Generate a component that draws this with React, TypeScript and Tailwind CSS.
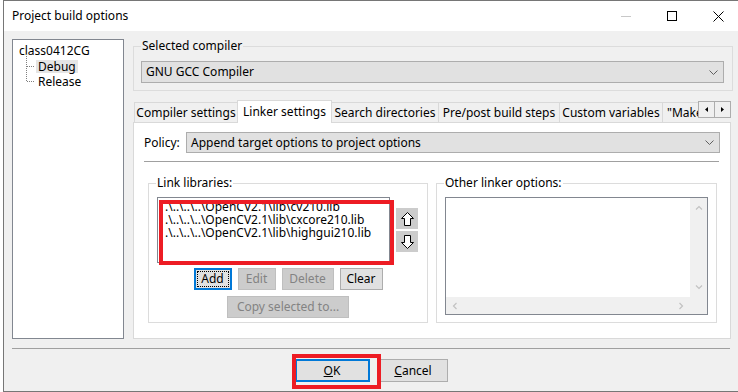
import React from "react";

const Chevron = () => (
  <svg width="9" height="5" viewBox="0 0 9 5">
    <path d="M0.5 0.5 L4.5 4.5 L8.5 0.5" fill="none" stroke="#606060" strokeWidth="1" />
  </svg>
);

const Dropdown = ({ text, className }: { text: string; className: string }) => (
  <div
    className={`flex items-center justify-between border border-[#adadad] bg-[#e1e1e1] pl-[4px] pr-[5px] ${className}`}
  >
    <span>{text}</span>
    <Chevron />
  </div>
);

const Arrow = ({ down }: { down?: boolean }) => (
  <svg width="13" height="14" viewBox="0 0 13 14" className={down ? "rotate-180" : ""}>
    <path
      d="M6.5 0.5 L12.5 6.5 L9.5 6.5 L9.5 13.5 L3.5 13.5 L3.5 6.5 L0.5 6.5 Z"
      fill="white"
      stroke="black"
      strokeWidth="1"
      strokeLinejoin="miter"
    />
  </svg>
);

const SbChevron = ({ d }: { d: string }) => (
  <svg width="8" height="8" viewBox="0 0 8 8">
    <path d={d} fill="none" stroke="#c2c2c2" strokeWidth="1.2" />
  </svg>
);

const tabs = [
  { label: "Compiler settings", w: "w-[104px]" },
  { label: "Linker settings", w: "w-[95px]", active: true },
  { label: "Search directories", w: "w-[108px]" },
  { label: "Pre/post build steps", w: "w-[122px]" },
  { label: "Custom variables", w: "w-[104px]" },
];

export default function App() {
  return (
    <div className="w-[738px] h-[392px] overflow-hidden bg-white text-[12px] leading-[16px] text-black font-['Noto_Sans','DejaVu_Sans',sans-serif]">
      <div className="ml-[3px] flex h-[392px] w-[738px] flex-col border-t border-l border-b border-[#767676]">
        {/* title bar */}
        <div className="flex h-[30px] shrink-0 items-center bg-white">
          <span className="pl-[8px]">Project build options</span>
          <div className="ml-auto flex h-full">
            <div className="flex w-[46px] items-center justify-center">
              <div className="h-px w-[10px] bg-[#c8c8c8]" />
            </div>
            <div className="flex w-[46px] items-center justify-center">
              <div className="h-[10px] w-[10px] border border-black" />
            </div>
            <div className="flex w-[46px] items-center justify-center">
              <svg width="11" height="11" viewBox="0 0 11 11">
                <path d="M0.5 0.5 L10.5 10.5 M10.5 0.5 L0.5 10.5" stroke="black" strokeWidth="1" />
              </svg>
            </div>
          </div>
        </div>

        {/* body */}
        <div className="flex flex-1 flex-col bg-[#f0f0f0] pt-[7px]">
          <div className="flex pl-[8px]">
            {/* tree */}
            <div className="mt-[1px] h-[300px] w-[112px] border border-[#828790] bg-white pl-[6px] pt-[3px]">
              <div className="h-[15px] leading-[15px]">class0412CG</div>
              <div className="flex">
                <svg width="12" height="34" viewBox="0 0 12 34" className="ml-[5px] -mt-[4px]">
                  <line x1="2.5" y1="0" x2="2.5" y2="28" stroke="#808080" strokeDasharray="1 1" />
                  <line x1="3" y1="12.5" x2="11" y2="12.5" stroke="#808080" strokeDasharray="1 1" />
                  <line x1="3" y1="27.5" x2="11" y2="27.5" stroke="#808080" strokeDasharray="1 1" />
                </svg>
                <div className="flex flex-col">
                  <div className="h-[15px] pt-[1px]">
                    <span className="inline-block bg-[#e5e5e5] px-[2px] leading-[13px]">Debug</span>
                  </div>
                  <div className="h-[16px] pl-[2px] pt-[1px] leading-[15px]">Release</div>
                </div>
              </div>
            </div>

            {/* right column */}
            <div className="ml-[9px] flex w-[600px] flex-col">
              <fieldset className="border border-[#dcdcdc] pb-[7px] pl-[7px] pr-[8px] pt-[7px]">
                <legend className="px-[1px]">Selected compiler</legend>
                <Dropdown text="GNU GCC Compiler" className="h-[22px]" />
              </fieldset>

              {/* tab strip */}
              <div className="mt-[9px] flex h-[22px] items-end pl-[1px]">
                {tabs.map((t, i) =>
                  t.active ? (
                    <div
                      key={t.label}
                      className={`relative z-10 -mb-px -ml-px flex h-[23px] items-center justify-center border-t border-l border-r border-[#d9d9d9] bg-white ${t.w}`}
                    >
                      {t.label}
                    </div>
                  ) : (
                    <div
                      key={t.label}
                      className={`flex h-[20px] items-center justify-center border-t border-l border-r border-[#d9d9d9] bg-[#f0f0f0] ${i > 0 ? "-ml-px" : ""} ${t.w}`}
                    >
                      {t.label}
                    </div>
                  )
                )}
                <div className="-ml-px flex h-[20px] w-[36px] items-center overflow-hidden whitespace-nowrap border-t border-l border-[#d9d9d9] bg-[#f0f0f0] pl-[4px]">
                  "Make
                </div>
                <div className="mb-[4px] flex h-[17px] w-[17px] items-center justify-center self-end border border-[#adadad] bg-[#f0f0f0]">
                  <svg width="3" height="5" viewBox="0 0 3 5">
                    <path d="M3 0 L0 2.5 L3 5 Z" fill="black" />
                  </svg>
                </div>
                <div className="-ml-px mb-[4px] flex h-[17px] w-[17px] items-center justify-center border border-[#adadad] bg-[#f0f0f0]">
                  <svg width="3" height="5" viewBox="0 0 3 5">
                    <path d="M0 0 L3 2.5 L0 5 Z" fill="black" />
                  </svg>
                </div>
              </div>

              {/* tab panel */}
              <div className="h-[217px] w-[598px] border border-[#d9d9d9] bg-white px-[10px] pt-[9px]">
                <div className="flex items-center">
                  <span className="w-[42px]">Policy:</span>
                  <Dropdown text="Append target options to project options" className="h-[21px] flex-1" />
                </div>
                <div className="mr-[1px] mt-[8px] h-px bg-[#a0a0a0]" />

                <div className="ml-[4px] mt-[13px] flex gap-[8px]">
                  {/* link libraries */}
                  <fieldset className="w-[280px] border border-[#dcdcdc] px-[8px] pb-[4px] pt-[6px]">
                    <legend className="-ml-[1px] px-[1px]">Link libraries:</legend>
                    <div className="flex gap-[6px]">
                      <div className="relative h-[66px] w-[233px] border border-[#828790] bg-white pl-[7px] pt-[2px] leading-[13px] whitespace-nowrap">
                        <div className="h-full overflow-hidden">
                          <div>.\..\..\..\OpenCV2.1\lib\cv210.lib</div>
                          <div>.\..\..\..\OpenCV2.1\lib\cxcore210.lib</div>
                          <div>.\..\..\..\OpenCV2.1\lib\highgui210.lib</div>
                        </div>
                        <div className="pointer-events-none absolute left-[1px] top-[2px] h-[65px] w-[235px] border-4 border-[#ed1c24]" />
                      </div>
                      <div className="mt-[11px] flex flex-col gap-[2px]">
                        <div className="flex h-[21px] w-[22px] items-center justify-center bg-[#cccccc]">
                          <Arrow />
                        </div>
                        <div className="flex h-[21px] w-[22px] items-center justify-center bg-[#cccccc]">
                          <Arrow down />
                        </div>
                      </div>
                    </div>
                    <div className="mt-[5px] flex justify-center gap-[6px]">
                      <div className="flex h-[22px] w-[38px] border-2 border-[#0078d7] bg-[#e1e1e1]">
                        <span className="m-[1px] flex flex-1 items-center justify-center border border-dotted border-black">
                          Add
                        </span>
                      </div>
                      <div className="flex h-[22px] w-[38px] items-center justify-center border border-[#bfbfbf] bg-[#cccccc] text-[#838383]">
                        Edit
                      </div>
                      <div className="flex h-[22px] w-[52px] items-center justify-center border border-[#bfbfbf] bg-[#cccccc] text-[#838383]">
                        Delete
                      </div>
                      <div className="flex h-[22px] w-[43px] items-center justify-center border border-[#adadad] bg-[#e1e1e1]">
                        Clear
                      </div>
                    </div>
                    <div className="mt-[6px] flex justify-center">
                      <div className="flex h-[22px] w-[122px] items-center justify-center border border-[#bfbfbf] bg-[#cccccc] text-[#838383]">
                        Copy selected to...
                      </div>
                    </div>
                  </fieldset>

                  {/* other linker options */}
                  <fieldset className="w-[281px] border border-[#dcdcdc] px-[8px] pb-[7px] pt-[6px]">
                    <legend className="-ml-[1px] px-[1px]">Other linker options:</legend>
                    <div className="flex h-[118px] w-[263px] flex-col border border-[#828790] bg-white">
                      <div className="flex flex-1">
                        <div className="flex-1" />
                        <div className="flex w-[17px] flex-col items-center justify-between bg-[#f0f0f0] py-[6px]">
                          <SbChevron d="M1 5.5 L4 2.5 L7 5.5" />
                          <SbChevron d="M1 2.5 L4 5.5 L7 2.5" />
                        </div>
                      </div>
                      <div className="flex h-[17px]">
                        <div className="flex flex-1 items-center justify-between bg-[#f0f0f0] px-[5px]">
                          <SbChevron d="M5.5 1 L2.5 4 L5.5 7" />
                          <SbChevron d="M2.5 1 L5.5 4 L2.5 7" />
                        </div>
                        <div className="w-[17px] bg-[#f0f0f0]" />
                      </div>
                    </div>
                  </fieldset>
                </div>
              </div>
            </div>
          </div>

          {/* bottom */}
          <div className="ml-[8px] mt-[9px] h-px w-[718px] bg-[#a0a0a0]" />
          <div className="mt-[10px] flex justify-center gap-[9px] pr-[3px]">
            <div className="relative flex h-[23px] w-[75px] items-center justify-center border-2 border-[#0078d7] bg-[#e1e1e1]">
              <span>
                <span className="underline">O</span>K
              </span>
              <div className="pointer-events-none absolute -left-[5px] -top-[7px] h-[35px] w-[89px] border-4 border-[#ed1c24]" />
            </div>
            <div className="flex h-[23px] w-[69px] items-center justify-center border border-[#adadad] bg-[#e1e1e1]">
              <span>
                <span className="underline">C</span>ancel
              </span>
            </div>
          </div>
        </div>
      </div>
    </div>
  );
}
